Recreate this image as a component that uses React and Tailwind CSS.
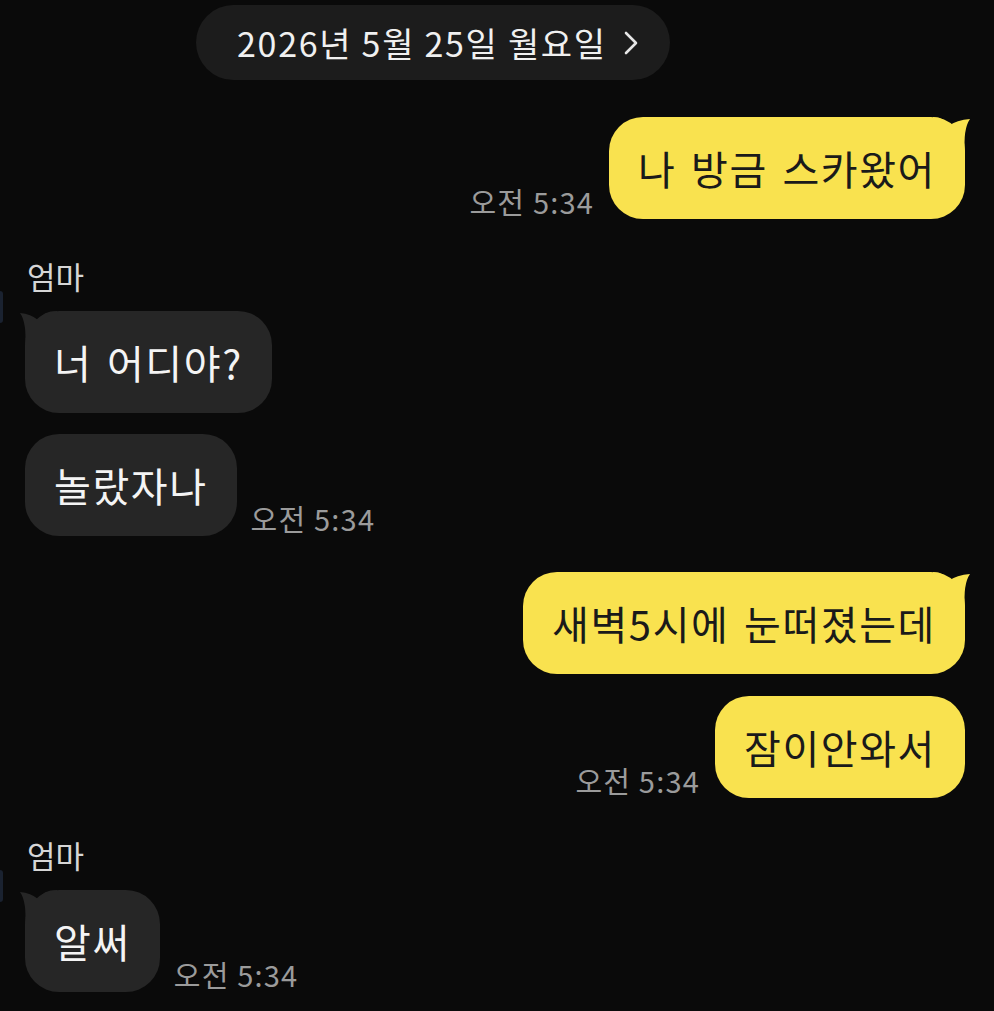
import React from 'react';

const font = { fontFamily: '"Noto Sans CJK KR", "Noto Sans", sans-serif' };

const TailRight = ({ color }) => (
  <svg className="absolute top-0 -right-[5px]" width="37" height="36" viewBox="0 0 37 36">
    <path d="M0 0 Q12 0 15 9 Q24 3 37 2 Q30 12 32 36 L0 36 Z" fill={color} />
  </svg>
);

const TailLeft = ({ color }) => (
  <svg className="absolute top-0 -left-[5px]" width="37" height="36" viewBox="0 0 37 36">
    <path d="M37 0 Q23 0 18 9 Q11 3 0 2 Q7 12 5 36 L37 36 Z" fill={color} />
  </svg>
);

const Time = () => (
  <span className="text-[29px] leading-none tracking-[1.2px] text-[#9b9b9b] whitespace-nowrap mb-[3px]">오전 5:34</span>
);

const MyBubble = ({ text, tail, time, className = '' }) => (
  <div className={`flex justify-end items-end gap-[15px] pr-[29px] ${className}`}>
    {time && <Time />}
    <div className="relative h-[102px] px-[29px] flex items-center rounded-[34px] bg-[#f9e24f] text-[#1a1a1a] text-[40px] leading-none tracking-[1.6px] [word-spacing:4px] whitespace-nowrap">
      {tail && <TailRight color="#f9e24f" />}
      <span className="relative">{text}</span>
    </div>
  </div>
);

const OtherBubble = ({ text, tail, time, className = '' }) => (
  <div className={`flex items-end gap-[14px] ${className}`}>
    <div className="relative h-[102px] px-[29px] flex items-center rounded-[34px] bg-[#262626] text-[#f4f4f4] text-[40px] leading-none tracking-[1.6px] [word-spacing:4px] whitespace-nowrap">
      {tail && <TailLeft color="#262626" />}
      <span className="relative">{text}</span>
    </div>
    {time && <Time />}
  </div>
);

const OtherGroup = ({ children, className = '' }) => (
  <div className={`flex ${className}`}>
    <div className="w-[3px] h-[32px] mt-[32px] rounded-r bg-[#1a2230]" />
    <div className="ml-[22px] flex flex-col">
      <div className="text-[31px] leading-[34px] text-[#d6d6d6] ml-[2px] mb-[18px]">엄마</div>
      {children}
    </div>
  </div>
);

export default function App() {
  return (
    <div className="w-[994px] h-[1011px] overflow-hidden bg-[#0a0a0a]" style={font}>
      <div className="pt-[5px] pl-[196px]">
        <div className="inline-flex items-center h-[75px] pl-[41px] pr-[31px] rounded-full bg-[#1c1c1c] text-[#f0f0f0] text-[34px] leading-none tracking-[1.7px]">
          <span>2026년 5월 25일 월요일</span>
          <svg className="ml-[16px]" width="16" height="24" viewBox="0 0 16 24">
            <path d="M3 2 L13 12 L3 22" fill="none" stroke="#e6e6e6" strokeWidth="2.6" strokeLinecap="round" strokeLinejoin="round" />
          </svg>
        </div>
      </div>

      <MyBubble className="mt-[37px]" text="나 방금 스카왔어" tail time />

      <OtherGroup className="mt-[40px]">
        <OtherBubble text="너 어디야?" tail />
        <OtherBubble className="mt-[21px]" text="놀랐자나" time />
      </OtherGroup>

      <MyBubble className="mt-[36px]" text="새벽5시에 눈떠졌는데" tail />
      <MyBubble className="mt-[22px]" text="잠이안와서" time />

      <OtherGroup className="mt-[40px]">
        <OtherBubble text="알써" tail time />
      </OtherGroup>
    </div>
  );
}
